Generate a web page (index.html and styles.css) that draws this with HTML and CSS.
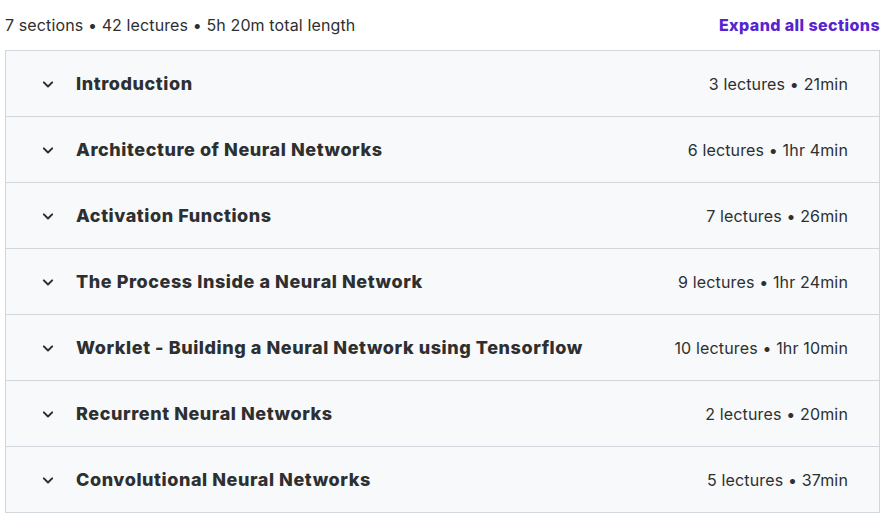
FILE: index.html
```html
<!DOCTYPE html>
<html lang="en">
<head>
<meta charset="utf-8">
<title>Course content</title>
<link rel="stylesheet" href="styles.css">
</head>
<body>
<div class="curriculum">
  <div class="summary">
    <span class="summary-text">7 sections • 42 lectures • 5h 20m total length</span>
    <button class="expand-all">Expand all sections</button>
  </div>
  <div class="sections">
    <div class="section">
      <svg class="chevron" viewBox="0 0 24 24"><path d="M7 10l5 5 5-5"/></svg>
      <span class="title">Introduction</span>
      <span class="meta">3 lectures • 21min</span>
    </div>
    <div class="section">
      <svg class="chevron" viewBox="0 0 24 24"><path d="M7 10l5 5 5-5"/></svg>
      <span class="title">Architecture of Neural Networks</span>
      <span class="meta">6 lectures • 1hr 4min</span>
    </div>
    <div class="section">
      <svg class="chevron" viewBox="0 0 24 24"><path d="M7 10l5 5 5-5"/></svg>
      <span class="title">Activation Functions</span>
      <span class="meta">7 lectures • 26min</span>
    </div>
    <div class="section">
      <svg class="chevron" viewBox="0 0 24 24"><path d="M7 10l5 5 5-5"/></svg>
      <span class="title">The Process Inside a Neural Network</span>
      <span class="meta">9 lectures • 1hr 24min</span>
    </div>
    <div class="section">
      <svg class="chevron" viewBox="0 0 24 24"><path d="M7 10l5 5 5-5"/></svg>
      <span class="title">Worklet - Building a Neural Network using Tensorflow</span>
      <span class="meta">10 lectures • 1hr 10min</span>
    </div>
    <div class="section">
      <svg class="chevron" viewBox="0 0 24 24"><path d="M7 10l5 5 5-5"/></svg>
      <span class="title">Recurrent Neural Networks</span>
      <span class="meta">2 lectures • 20min</span>
    </div>
    <div class="section">
      <svg class="chevron" viewBox="0 0 24 24"><path d="M7 10l5 5 5-5"/></svg>
      <span class="title">Convolutional Neural Networks</span>
      <span class="meta">5 lectures • 37min</span>
    </div>
  </div>
</div>
</body>
</html>
```
FILE: styles.css
```css
* { box-sizing: border-box; }

body {
  margin: 0;
  background: #ffffff;
  color: #2d2f31;
  font-family: Inter, "Noto Sans", Roboto, sans-serif;
}

.curriculum {
  padding: 0 4px 0 5px;
}

.summary {
  height: 50px;
  display: flex;
  align-items: center;
  justify-content: space-between;
}

.summary-text {
  font-size: 16px;
  letter-spacing: 0.12px;
  color: #2d2f31;
}

.expand-all {
  border: 0;
  background: none;
  padding: 0;
  font-family: inherit;
  font-size: 16px;
  font-weight: 800;
  letter-spacing: 0.42px;
  color: #5624d0;
  cursor: pointer;
}

.sections {
  border: 1px solid #d1d7dc;
  border-bottom: 0;
}

.section {
  height: 66px;
  display: flex;
  align-items: center;
  padding: 0 31px 0 32px;
  background: #f7f9fa;
  border-bottom: 1px solid #d1d7dc;
}

.chevron {
  width: 20px;
  height: 20px;
  fill: none;
  stroke: #2d2f31;
  stroke-width: 2.4;
  stroke-linecap: round;
  stroke-linejoin: round;
  margin-right: 18px;
  flex: none;
}

.title {
  flex: 1;
  font-size: 18px;
  font-weight: 800;
  letter-spacing: 0.57px;
  color: #2d2f31;
}

.meta {
  font-size: 16px;
  letter-spacing: 0.15px;
  color: #2d2f31;
}
```
